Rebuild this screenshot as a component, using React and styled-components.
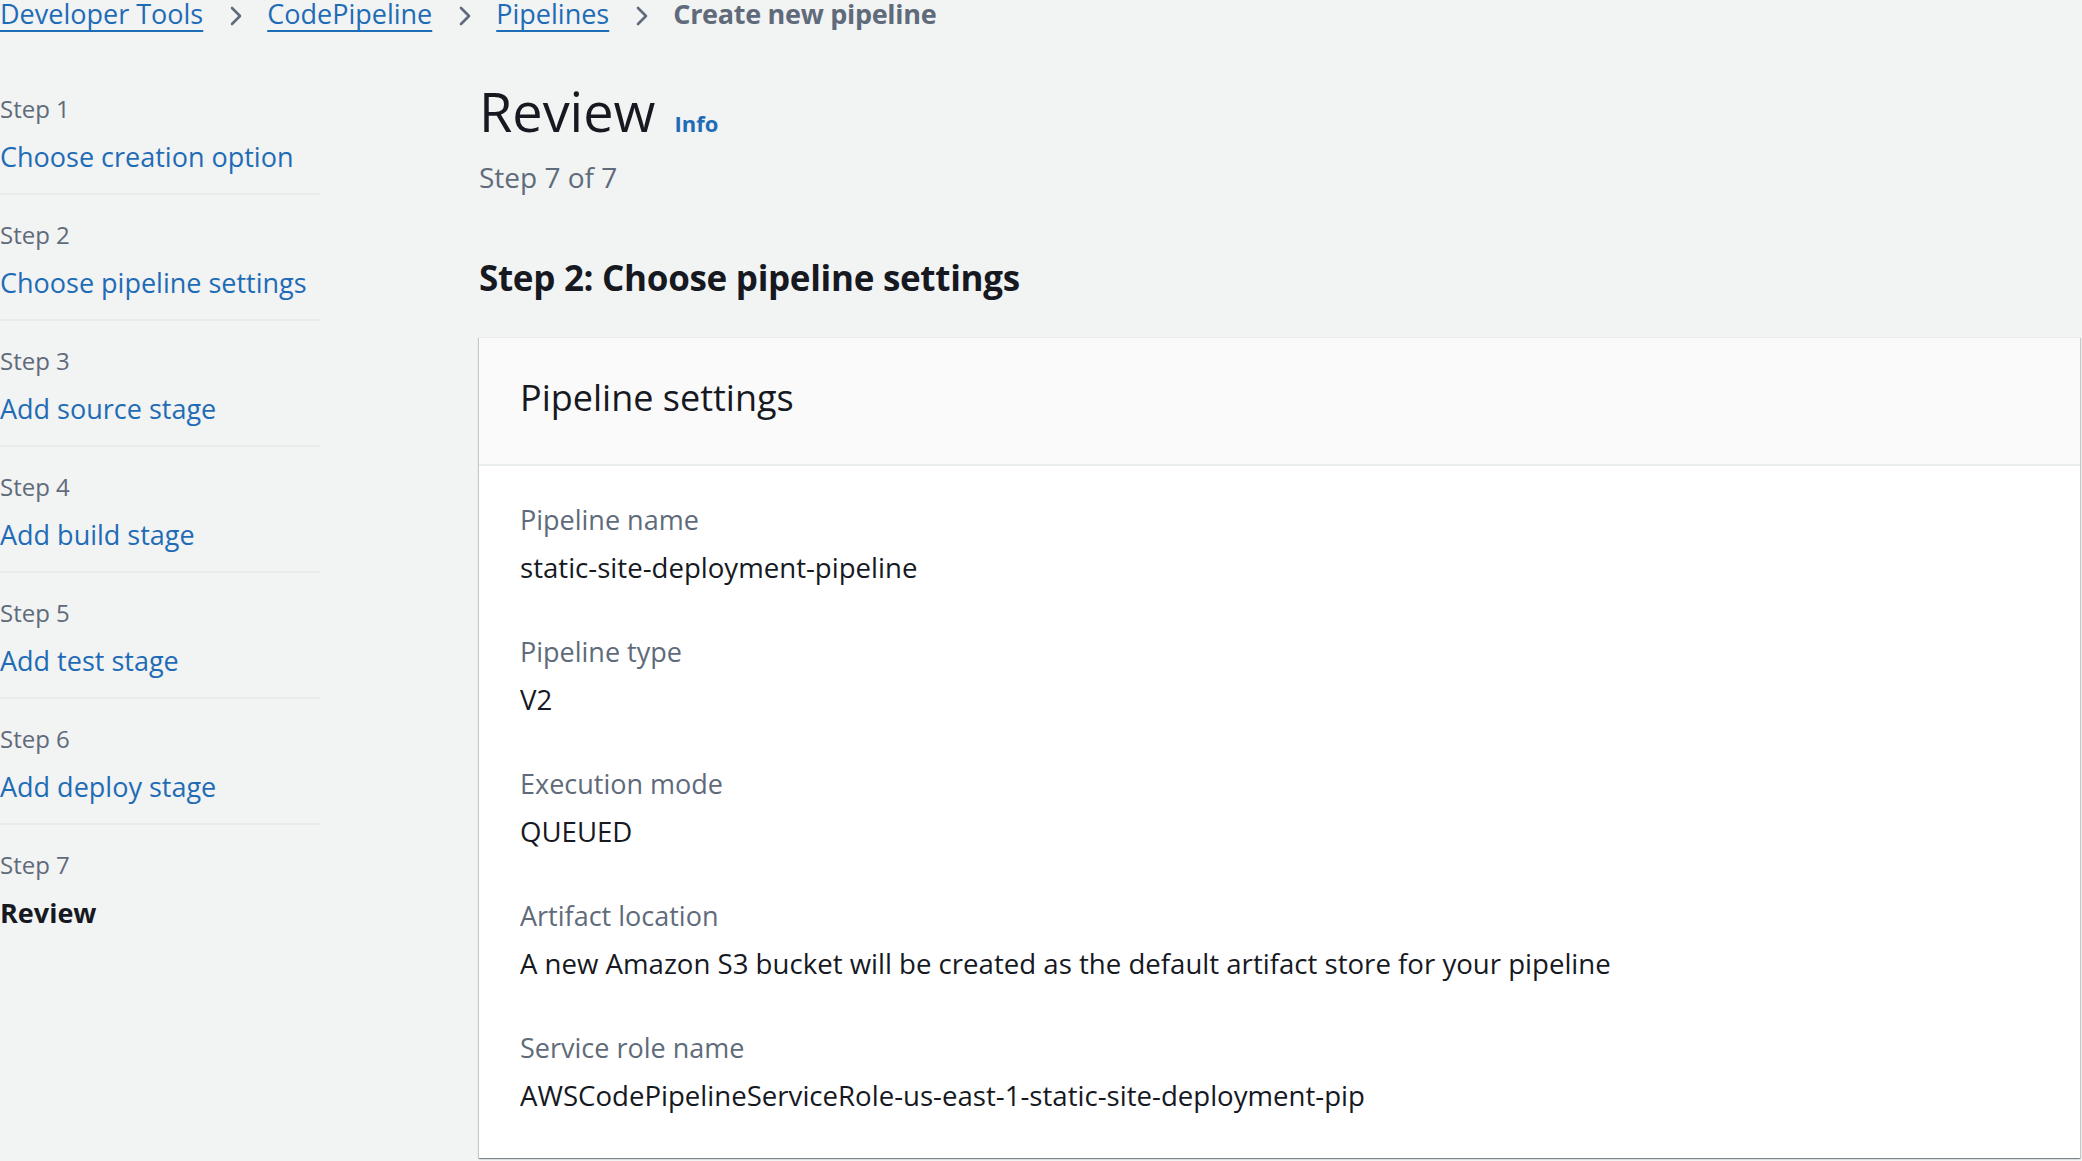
import React from 'react';
import styled, { createGlobalStyle } from 'styled-components';

const Global = createGlobalStyle`
  html, body { margin: 0; padding: 0; background: #f2f3f3; }
  body {
    font-family: "Open Sans", "Noto Sans", sans-serif;
    color: #16191f;
    overflow: hidden;
  }
  * { box-sizing: border-box; }
`;

const LINK = '#1f6cb6';
const GREY = '#5f6b7a';
const INK = '#16191f';

const Page = styled.div`
  width: 2082px;
  height: 1161px;
  overflow: hidden;
  background: #f2f3f3;
`;

const Breadcrumbs = styled.nav`
  display: flex;
  align-items: center;
  height: 27px;
  font-size: 27px;
  line-height: 27px;
  white-space: nowrap;
`;

const Crumb = styled.a`
  color: ${LINK};
  text-decoration: underline;
  text-underline-offset: 6px;
  text-decoration-thickness: 2px;
  cursor: pointer;
`;

const CurrentCrumb = styled.span`
  color: ${GREY};
  font-weight: 700;
  letter-spacing: -0.3px;
`;

const Sep = styled.span`
  display: flex;
  width: 14px;
  height: 20px;
  margin: 4px 24px 0 26px;
`;

const Layout = styled.div`
  display: flex;
  margin-top: 42px;
`;

const SideNav = styled.ol`
  width: 320px;
  flex-shrink: 0;
  list-style: none;
  margin: 0;
  padding: 0;
`;

const NavItem = styled.li`
  padding: 23.5px 0 18px;
  border-bottom: 2px solid #e9ebed;
  &:last-child { border-bottom: none; }
`;

const StepLabel = styled.div`
  font-size: 24px;
  line-height: 32px;
  color: ${GREY};
`;

const StepLink = styled.a`
  display: block;
  margin-top: 14.5px;
  font-size: 27px;
  line-height: 36px;
  white-space: nowrap;
  text-decoration: none;
  color: ${p => (p.$current ? INK : LINK)};
  font-weight: ${p => (p.$current ? 700 : 400)};
  cursor: pointer;
`;

const Main = styled.main`
  flex: 1;
  min-width: 0;
  margin-left: 159px;
  padding: 10px 2px 0 0;
`;

const TitleRow = styled.div`
  display: flex;
  align-items: baseline;
  gap: 19px;
`;

const Title = styled.h1`
  margin: 0;
  font-size: 54px;
  line-height: 64px;
  font-weight: 400;
  color: ${INK};
`;

const InfoLink = styled.a`
  font-size: 22px;
  font-weight: 700;
  color: ${LINK};
  cursor: pointer;
`;

const Subtitle = styled.div`
  margin-top: 16px;
  font-size: 28px;
  line-height: 36px;
  color: ${GREY};
`;

const SectionTitle = styled.h2`
  margin: 61px 0 0;
  font-size: 35px;
  line-height: 44px;
  letter-spacing: -0.3px;
  font-weight: 700;
  color: ${INK};
`;

const Card = styled.section`
  margin-top: 37px;
  background: #fff;
  border-top: 1px solid #eaeded;
  box-shadow: 0 1px 1px 0 rgba(0, 28, 36, 0.3),
    1px 1px 1px 0 rgba(0, 28, 36, 0.15),
    -1px 1px 1px 0 rgba(0, 28, 36, 0.15);
`;

const CardHeader = styled.header`
  background: #fafafa;
  padding: 38px 41px 44px;
  border-bottom: 2px solid #eaeded;
`;

const CardTitle = styled.h2`
  margin: 0;
  font-size: 36px;
  line-height: 44px;
  font-weight: 400;
  color: ${INK};
`;

const CardBody = styled.dl`
  margin: 0;
  padding: 35.5px 41px 45.5px;
  display: flex;
  flex-direction: column;
  gap: 49px;
`;

const Field = styled.div`
  display: flex;
  flex-direction: column;
  gap: 11px;
`;

const FieldLabel = styled.dt`
  font-size: 27px;
  line-height: 36px;
  color: ${GREY};
`;

const FieldValue = styled.dd`
  margin: 0;
  font-size: 27.6px;
  line-height: 36px;
  color: ${INK};
  white-space: nowrap;
`;

const Chevron = () => (
  <svg width="14" height="20" viewBox="0 0 14 20" fill="none">
    <path d="M3 2 L11 10 L3 18" stroke={GREY} strokeWidth="2.6" strokeLinecap="round" strokeLinejoin="round" />
  </svg>
);

const steps = [
  'Choose creation option',
  'Choose pipeline settings',
  'Add source stage',
  'Add build stage',
  'Add test stage',
  'Add deploy stage',
  'Review',
];

const fields = [
  ['Pipeline name', 'static-site-deployment-pipeline'],
  ['Pipeline type', 'V2'],
  ['Execution mode', 'QUEUED'],
  ['Artifact location', 'A new Amazon S3 bucket will be created as the default artifact store for your pipeline'],
  ['Service role name', 'AWSCodePipelineServiceRole-us-east-1-static-site-deployment-pip'],
];

const crumbs = ['Developer Tools', 'CodePipeline', 'Pipelines'];

export default function App() {
  return (
    <Page>
      <Global />
      <Breadcrumbs aria-label="Breadcrumbs">
        {crumbs.map(c => (
          <React.Fragment key={c}>
            <Crumb>{c}</Crumb>
            <Sep><Chevron /></Sep>
          </React.Fragment>
        ))}
        <CurrentCrumb>Create new pipeline</CurrentCrumb>
      </Breadcrumbs>
      <Layout>
        <SideNav>
          {steps.map((s, i) => (
            <NavItem key={s}>
              <StepLabel>Step {i + 1}</StepLabel>
              <StepLink $current={i === steps.length - 1}>{s}</StepLink>
            </NavItem>
          ))}
        </SideNav>
        <Main>
          <TitleRow>
            <Title>Review</Title>
            <InfoLink>Info</InfoLink>
          </TitleRow>
          <Subtitle>Step 7 of 7</Subtitle>
          <SectionTitle>Step 2: Choose pipeline settings</SectionTitle>
          <Card>
            <CardHeader>
              <CardTitle>Pipeline settings</CardTitle>
            </CardHeader>
            <CardBody>
              {fields.map(([label, value]) => (
                <Field key={label}>
                  <FieldLabel>{label}</FieldLabel>
                  <FieldValue>{value}</FieldValue>
                </Field>
              ))}
            </CardBody>
          </Card>
        </Main>
      </Layout>
    </Page>
  );
}
